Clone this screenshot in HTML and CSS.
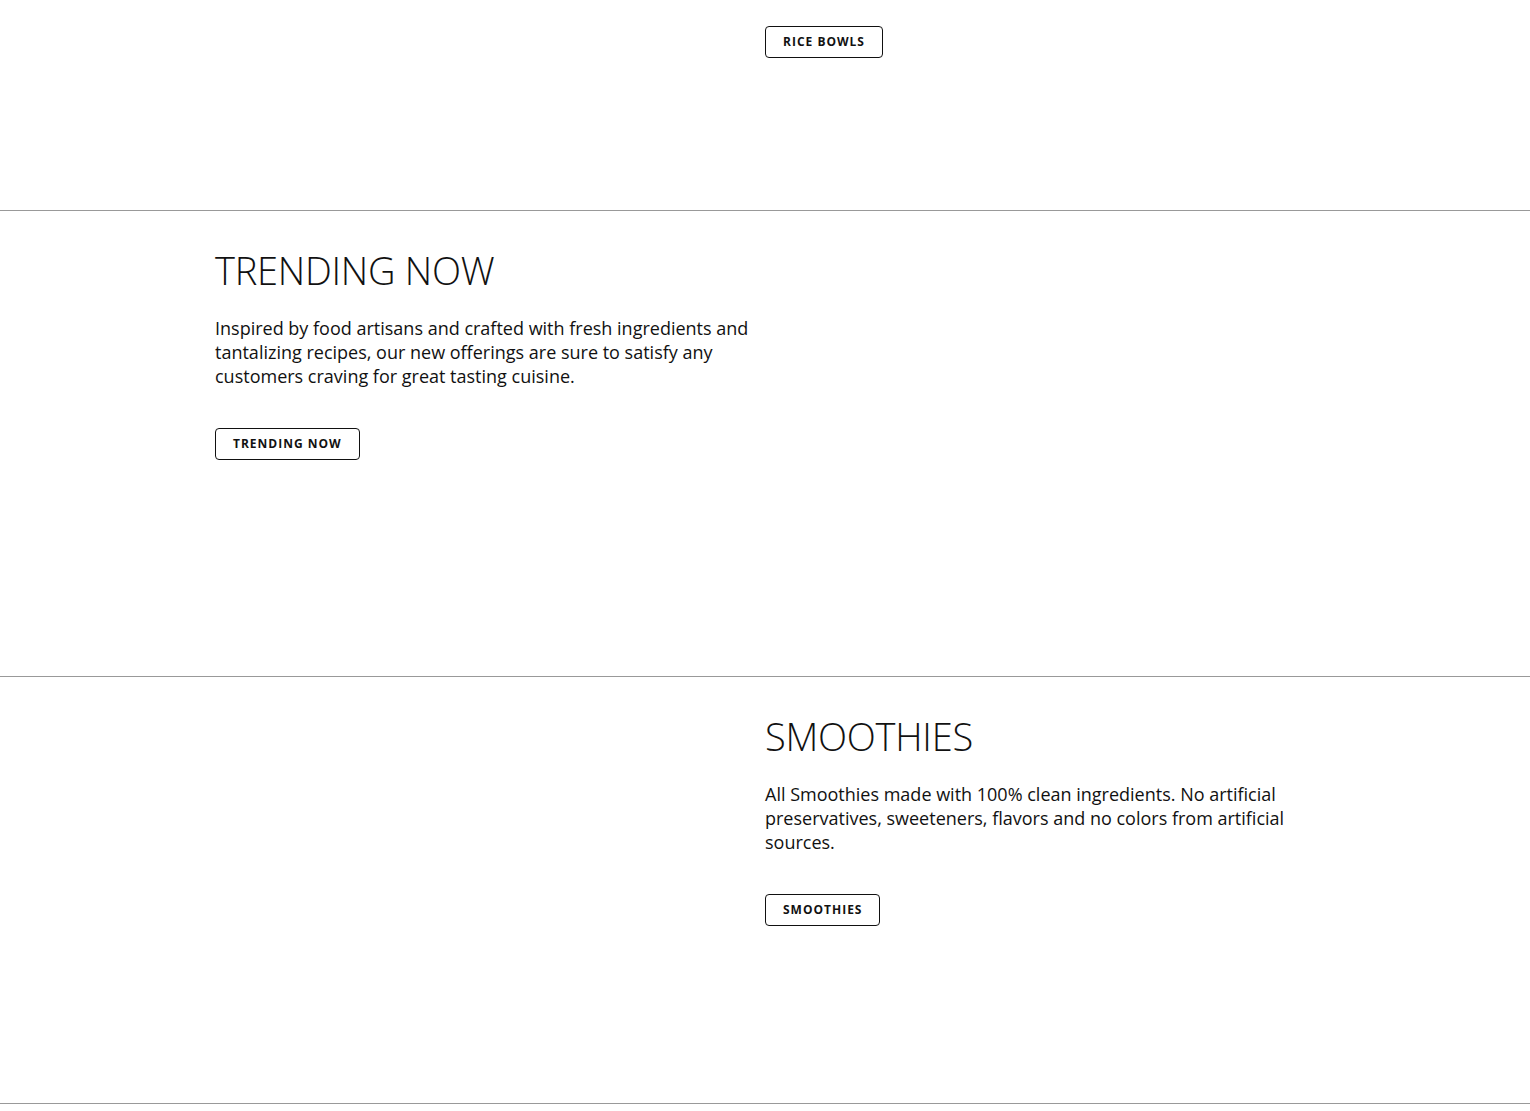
FILE: index.html
```html
<!DOCTYPE html>
<html lang="en">
<head>
<meta charset="utf-8">
<title>Menu</title>
<link rel="stylesheet" href="styles.css">
</head>
<body>
<section class="feature feature-first">
  <div class="container">
    <div class="col"></div>
    <div class="col">
      <a class="btn" href="#">RICE BOWLS</a>
    </div>
  </div>
</section>
<section class="feature feature-trending">
  <div class="container">
    <div class="col">
      <h2 class="title">TRENDING NOW</h2>
      <p class="text">Inspired by food artisans and crafted with fresh ingredients and tantalizing recipes, our new offerings are sure to satisfy any customers craving for great tasting cuisine.</p>
      <a class="btn" href="#">TRENDING NOW</a>
    </div>
    <div class="col"></div>
  </div>
</section>
<section class="feature feature-smoothies">
  <div class="container">
    <div class="col"></div>
    <div class="col">
      <h2 class="title">SMOOTHIES</h2>
      <p class="text">All Smoothies made with 100% clean ingredients. No artificial preservatives, sweeteners, flavors and no colors from artificial sources.</p>
      <a class="btn" href="#">SMOOTHIES</a>
    </div>
  </div>
</section>
</body>
</html>
```

FILE: styles.css
```css
html, body {
  margin: 0;
  padding: 0;
  background: #fff;
}

body {
  font-family: "Open Sans", "Noto Sans", sans-serif;
  color: #111;
}

.feature {
  border-bottom: 1px solid #999;
}

.feature-first {
  padding: 26px 0 152px;
}

.feature-trending {
  padding: 36px 0 216px;
}

.feature-smoothies {
  padding: 36px 0 177px;
}

.container {
  width: 1100px;
  margin: 0 auto;
  display: grid;
  grid-template-columns: 550px 550px;
}

.col {
  display: flex;
  flex-direction: column;
  align-items: flex-start;
}

.title {
  margin: 0;
  font-size: 38px;
  line-height: 46px;
  font-weight: 300;
  letter-spacing: -0.25px;
  color: #111;
}

.text {
  margin: 23px 0 40px;
  font-size: 18px;
  line-height: 24px;
  font-weight: 400;
  max-width: 550px;
  color: #111;
}

.btn {
  display: inline-block;
  box-sizing: border-box;
  height: 32px;
  padding: 0 17px;
  border: 1px solid #111;
  border-radius: 4px;
  font-size: 12px;
  line-height: 30px;
  font-weight: 700;
  letter-spacing: 1px;
  color: #111;
  text-decoration: none;
}
```
